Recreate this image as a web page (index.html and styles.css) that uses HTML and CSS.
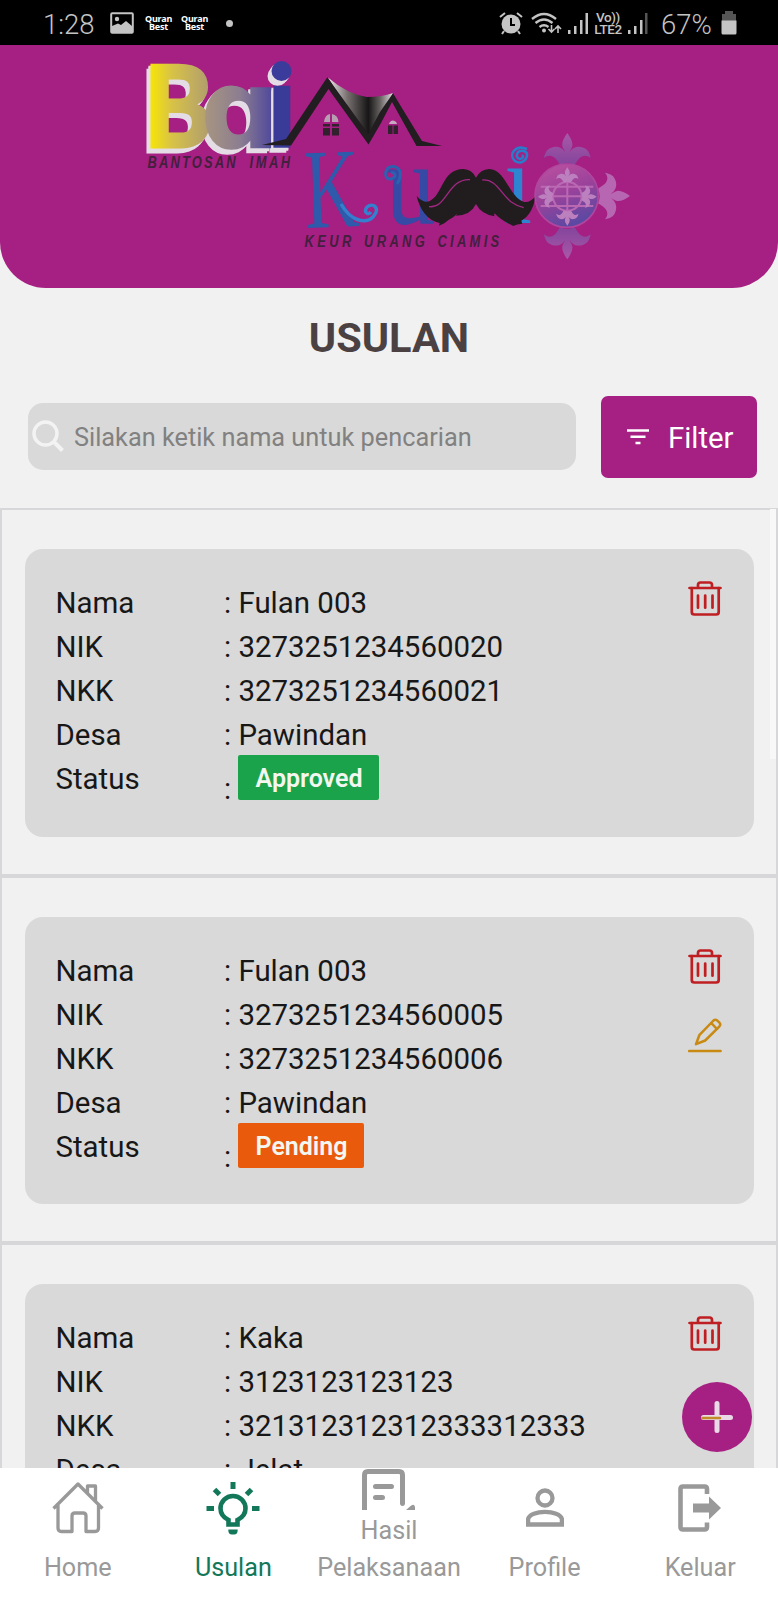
FILE: index.html
```html
<!DOCTYPE html>
<html lang="id">
<head>
<meta charset="utf-8">
<meta name="viewport" content="width=device-width, initial-scale=1">
<title>Usulan</title>
<link rel="stylesheet" href="styles.css">
</head>
<body>
<svg class="sprite" width="0" height="0" aria-hidden="true">
  <symbol id="trash" viewBox="0 0 34 35">
    <g fill="none" stroke="#bf1f22" stroke-width="2.700" stroke-linejoin="round" stroke-linecap="round">
      <path d="M1.500 7H32.500M10 6.500V4Q10 1.500 12.500 1.500H21.500Q24 1.500 24 4V6.500" />
      <path d="M3.800 7V31Q3.800 33.500 6.300 33.500H28.200Q30.700 33.500 30.700 31V7" />
      <path d="M10 14.500V26.700M17.200 14.500V26.700M24.500 14.500V26.700" />
    </g>
  </symbol>
  <symbol id="pencil" viewBox="0 0 34 35">
    <g fill="none" stroke="#c88a12" stroke-width="2.500" stroke-linejoin="round" stroke-linecap="round">
      <path d="M1.300 33H32.500" stroke-width="2.700" />
      <path d="M8 26.200L11.300 17.200L25.500 2.500Q27.200 1 29 2.300L31.500 4.700Q33 6.500 31.500 8.300L17.200 22.500Z M23.300 5L29 11.200" />
    </g>
  </symbol>
  <symbol id="fleur" viewBox="-75 -100 150 105">
    <path d="M0-94C-10-80-17-66-15-55C-13-45-8-43-7-36C-12-48-30-58-48-50C-60-46-66-38-70-19C-58-30-45-27-36-18C-29-10-25-2-22 2Q0-8 22 2C25-2 29-10 36-18C45-27 58-30 70-19C66-38 60-46 48-50C30-58 12-48 7-36C8-43 13-45 15-55C17-66 10-80 0-94Z" />
  </symbol>
</svg>

<div class="screen">
  <div class="statusbar">
    <div class="status-left">
      <span class="time">1:28</span>
      <svg class="photo" width="24" height="22" viewBox="0 0 24 22"><rect x="1.200" y="1.200" width="21.600" height="19.600" rx="1" fill="none" stroke="#c4c4c4" stroke-width="2" /><circle cx="7" cy="7" r="2.200" fill="#c4c4c4" /><path d="M2 20V14L8 11.500L11 13L16 9L22 14V20Z" fill="#c4c4c4" /></svg>
      <span class="quran">Quran<br>Best</span>
      <span class="quran">Quran<br>Best</span>
      <span class="dot"></span>
    </div>
    <div class="status-right">
      <svg width="24" height="23" viewBox="0 0 24 23" fill="none" stroke="#c4c4c4" stroke-width="2"><circle cx="12" cy="12" r="9.500" fill="#c4c4c4" stroke="none" /><path d="M1 5L6 1M18 1L23 5M5 19L3 22M19 19L21 22" /><path d="M12 6V13H16" stroke="#000" /></svg>
      <svg width="31" height="23" viewBox="0 0 31 23" fill="none" stroke="#c4c4c4" stroke-width="2.300"><path d="M1 7Q13-3 25 7M4.500 11Q13 4 21.500 11M8.500 15Q13 11.500 17.500 15" /><circle cx="13" cy="18.500" r="2" fill="#c4c4c4" stroke="none" /><path stroke-width="1.600" d="M20.500 13V20M17.500 17L20.500 20L23.500 17M27 21V14M24 17L27 14L30 17" /></svg>
      <svg class="signal" width="21" height="23" viewBox="0 0 21 23" fill="#c4c4c4"><path d="M0 18h2.500v4H0zM6 14h2.500v8H6zM12 8h2.500v14H12zM17.500 1H20v21h-2.500z" /></svg>
      <span class="lte">Vo))<br>LTE2</span>
      <svg class="signal2" width="21" height="23" viewBox="0 0 21 23" fill="#c4c4c4"><path d="M0 18h2.500v4H0zM6 14h2.500v8H6zM12 8h2.500v14H12z" /><path fill="#555" d="M17 1h2.500v21H17z" /></svg>
      <span class="percent">67%</span>
      <svg width="16" height="24" viewBox="0 0 16 24"><path fill="#555" d="M4 0H12V3H15V10H1V3H4Z" /><path fill="#c4c4c4" d="M.5 9.500H15.500V22Q15.500 23.500 14 23.500H2Q.5 23.500 .5 22Z" /></svg>
    </div>
  </div>

  <header class="hero">
    <svg width="778" height="243" viewBox="0 45 778 243">
      <defs>
        <linearGradient id="roof" x1="0" y1="0" x2="1" y2="0">
          <stop offset="0" stop-color="#eee8ea" /><stop offset=".3" stop-color="#77706f" /><stop offset=".62" stop-color="#171516" /><stop offset=".8" stop-color="#656160" /><stop offset="1" stop-color="#e4dfe2" />
        </linearGradient>
        <linearGradient id="orb" x1=".3" y1="0" x2=".7" y2="1">
          <stop offset="0" stop-color="#b84f9f" /><stop offset=".45" stop-color="#9a429b" /><stop offset="1" stop-color="#514aa4" />
        </linearGradient>
        <linearGradient id="petal" x1="0" y1="0" x2="0" y2="1">
          <stop offset="0" stop-color="#aa58a8" /><stop offset="1" stop-color="#83459c" />
        </linearGradient>
        <linearGradient id="bai-b" x1="0" y1="0" x2="1" y2="0"><stop offset=".05" stop-color="#fbe900" /><stop offset=".4" stop-color="#d8c346" /><stop offset="1" stop-color="#ad9a72" /></linearGradient>
        <linearGradient id="bai-a" x1="0" y1="0" x2="1" y2="0"><stop offset="0" stop-color="#aa987e" /><stop offset=".5" stop-color="#8c7d91" /><stop offset=".95" stop-color="#49439b" /></linearGradient>
      </defs>

      <g class="bai">
        <g transform="translate(144 146.500) scale(.9 .97)"><text class="bai-b" fill="url(#bai-b)" stroke="url(#bai-b)">B</text></g>
        <g transform="translate(201 146.500) scale(.98 .97)"><text class="bai-a" fill="url(#bai-a)" stroke="url(#bai-a)">ɑ</text></g>
        <g transform="translate(266.500 146.500) scale(.8 .98)"><text class="bai-a" fill="#3a3a98" stroke="#3a3a98">ı</text></g>
        <circle cx="281.500" cy="71" r="10" fill="#3b3b9b" />
      </g>

      <path fill="url(#roof)" d="M328 77.500Q347 94 367 97Q382 97 393 93L368.500 142Z" />
      <path fill="#211d20" d="M262 145L286 139L327.300 77.300L368.300 134L380 112L393 93.300L422 141L442 146H416.500L392 102L381 123L368.500 144.500L328.500 89L291 145.500Z" />
      <g fill="#30212c"><path d="M323 124H330V126.500H323ZM332 124H339V126.500H332ZM323 128H330V135.500H323ZM332 128H339V135.500H332Z" /><path fill="#b69fb1" d="M324 122Q325 114.500 330 114V122ZM332 114Q338 115 338.500 122H332Z" />
      <path d="M388 125.500H392.500V134H388ZM393.500 125.500H398V134H393.500Z" /><path fill="#c6abc0" d="M389 124Q390 120.500 393 120.500Q396.500 121 397 124Z" /></g>

      <g class="tagline">
        <g transform="translate(147.500 168) scale(.78 1)"><text textLength="113">BANTOSAN</text></g>
        <g transform="translate(249.500 168) scale(.78 1)"><text textLength="52">IMAH</text></g>
        <g transform="translate(304.500 246.500) scale(.78 1)"><text textLength="60">KEUR</text></g>
        <g transform="translate(364 246.500) scale(.78 1)"><text textLength="78">URANG</text></g>
        <g transform="translate(437.500 246.500) scale(.78 1)"><text textLength="79">CIAMIS</text></g>
      </g>

      <g transform="translate(306 228) rotate(-2) scale(.66 1)"><text class="kuni" fill="#2f59aa">K</text></g>
      <path d="M341 204C350 220 365 225 373 217C381 208 373 202 367 207C363 212 368 216 371 212" fill="none" stroke="#347fce" stroke-width="3.500" />
      <g transform="translate(386 224) scale(.83 1)"><text class="kuni kuni-u" fill="#3549a5">u</text></g>
      <path d="M397 184C406 170 395 163 388 168C381 177 391 183 395 176Q395 172 391 173" fill="none" stroke="#2c61b0" stroke-width="3" />
      <g transform="translate(504 223) scale(.85 1)"><text class="kuni kuni-u" fill="#2d84d0">ı</text></g>
      <path d="M527 149C515 144 508 155 515 161C523 167 532 154 524 151C517 149 514 158 520 159Q525 158 522 155" fill="none" stroke="#287cc9" stroke-width="2.600" />

      <g transform="translate(380 60) scale(.3333)">
        <path fill="#211d1e" d="M110 408Q130 430 148 424C190 404 185 328 250 327Q276 328 288 353Q302 328 327 327C376 327 386 408 430 425Q448 431 467 408C460 448 446 470 424 482L427 491Q410 492 400 498C379 488 363 480 344 460Q341 466 344 469Q304 463 288 432Q272 466 228 467L232 461C218 475 202 480 193 490L177 497L179 489C145 483 119 450 110 408Z" />
        <path d="M147 440C202 446 202 356 270 359M307 360C350 357 361 401 394 426Q412 439 431 443" fill="none" stroke="#a02782" stroke-width="4" />
        <g fill="url(#petal)">
          <use href="#fleur" x="-75" y="-100" width="150" height="105" transform="translate(562 313)" />
          <use href="#fleur" x="-75" y="-100" width="150" height="105" transform="translate(562 504) scale(1 -1)" />
        </g>
        <use href="#fleur" x="-75" y="-100" width="150" height="105" transform="translate(656 408) rotate(90)" fill="#b766b1" />
        <circle cx="560" cy="407" r="95" fill="url(#orb)" stroke="#b0479f" stroke-width="5" />
        <g fill="none" stroke="#bb68b3" stroke-width="6"><circle cx="562" cy="409" r="43" /><path d="M482 380H640M482 438H640M562 365V455M510 409H612" /></g>
        <g fill="#bd80bf">
          <use href="#fleur" x="-36" y="-48" width="72" height="50" transform="translate(562 367)" />
          <use href="#fleur" x="-36" y="-48" width="72" height="50" transform="translate(562 452) scale(1 -1)" />
          <use href="#fleur" x="-36" y="-48" width="72" height="50" transform="translate(519 410) rotate(-90)" />
          <use href="#fleur" x="-36" y="-48" width="72" height="50" transform="translate(605 410) rotate(90)" />
        </g>
      </g>
    </svg>
  </header>

  <h1 class="title">USULAN</h1>

  <div class="tools">
    <div class="search">
      <svg width="32" height="32" viewBox="0 0 32 32" fill="none" stroke="#f3f3f3" stroke-width="3.500"><circle cx="13.500" cy="13.500" r="11.500" /><path d="M21.500 21.500L30.500 30.500" stroke-width="4" /></svg>
      <span>Silakan ketik nama untuk pencarian</span>
    </div>
    <div class="filter">
      <svg width="22" height="16" viewBox="0 0 22 16" stroke="#fff" stroke-width="2.500"><path d="M0 1.500H22M3.500 7.800H18.500M8.500 14H13.500" /></svg>
      <span>Filter</span>
    </div>
  </div>

  <main class="list">
    <section class="item">
      <div class="card">
        <dl class="data">
          <dt>Nama</dt><dd>: Fulan 003</dd>
          <dt>NIK</dt><dd>: 3273251234560020</dd>
          <dt>NKK</dt><dd>: 3273251234560021</dd>
          <dt>Desa</dt><dd>: Pawindan</dd>
          <dt>Status</dt><dd class="state"><span class="colon">:</span><span class="badge approved">Approved</span></dd>
        </dl>
        <div class="actions"><svg width="34" height="35"><use href="#trash" /></svg></div>
      </div>
    </section>
    <section class="item">
      <div class="card">
        <dl class="data">
          <dt>Nama</dt><dd>: Fulan 003</dd>
          <dt>NIK</dt><dd>: 3273251234560005</dd>
          <dt>NKK</dt><dd>: 3273251234560006</dd>
          <dt>Desa</dt><dd>: Pawindan</dd>
          <dt>Status</dt><dd class="state"><span class="colon">:</span><span class="badge pending">Pending</span></dd>
        </dl>
        <div class="actions"><svg width="34" height="35"><use href="#trash" /></svg><svg width="34" height="35"><use href="#pencil" /></svg></div>
      </div>
    </section>
    <section class="item">
      <div class="card">
        <dl class="data">
          <dt>Nama</dt><dd>: Kaka</dd>
          <dt>NIK</dt><dd>: 3123123123123</dd>
          <dt>NKK</dt><dd>: 321312312312333312333</dd>
          <dt>Desa</dt><dd>: Jelat</dd>
        </dl>
        <div class="actions"><svg width="34" height="35"><use href="#trash" /></svg></div>
      </div>
    </section>
    <div class="scrollbar"></div>
    <div class="fab">
      <svg width="70" height="70" viewBox="0 0 70 70" stroke-linecap="round"><path d="M35 21.500V48.500M21.500 35.500H48.500" stroke="#ead9e6" stroke-width="5" /><path d="M20.500 36H38" stroke="#c08b28" stroke-width="2.600" /></svg>
    </div>
  </main>

  <nav class="nav">
    <div class="tab">
      <svg width="52" height="52" viewBox="0 0 52 52" fill="none" stroke="#999" stroke-width="3.300" stroke-linejoin="round"><path d="M1.500 26.500L26 2L50.500 26.500M6 22V46Q6 49.500 9.500 49.500H20V34Q20 31 23 31H31Q34 31 34 34V49.500H43Q46.500 49.500 46.500 46V22M35.500 11V4H43.500V19" /></svg>
      <span>Home</span>
    </div>
    <div class="tab active">
      <svg width="54" height="54" viewBox="0 0 54 54" fill="none" stroke="#127859" stroke-width="4.600"><path d="M22.500 43.500V39Q14.500 35 14.500 27.500A12.500 12.500 0 0 1 39.500 27.500Q39.500 35 31.500 39V43.500Z" /><path d="M22.300 48.500H31.700V49Q31.700 53.500 28 53.500H26Q22.300 53.500 22.300 49Z" fill="#127859" stroke="none" /><path stroke-width="5" d="M27 1V8M.5 27.500H8M46 27.500H53.500M8.500 8.500L13.500 13.500M45.500 8.500L40.500 13.500" /></svg>
      <span>Usulan</span>
    </div>
    <div class="tab result">
      <svg width="54" height="42" viewBox="0 0 54 42"><path d="M2.500 41V6Q2.500 2.500 6 2.500H37Q40.500 2.500 40.500 6V35" fill="none" stroke="#999" stroke-width="5" /><path d="M38 34H43Q43 37 40.500 37Q38 37 38 34ZM44 41L48 37.500Q52 34 53 38V41Z" fill="#999" /><path d="M13.500 17.500H29.500M13.500 28.500H20.500" stroke="#999" stroke-width="5" stroke-linecap="round" /></svg>
      <span>Hasil<br>Pelaksanaan</span>
    </div>
    <div class="tab profile">
      <svg width="38" height="39" viewBox="0 0 38 39" fill="none" stroke="#999" stroke-width="4.300"><circle cx="19" cy="10" r="7.500" /><path d="M2.100 36.500V31C4 21.500 34 21.500 35.900 31V36.500Z" /></svg>
      <span>Profile</span>
    </div>
    <div class="tab logout">
      <svg width="44" height="48" viewBox="0 0 44 48"><path d="M29 10V5Q29 2.500 26.500 2.500H5Q2.500 2.500 2.500 5V43Q2.500 45.500 5 45.500H26.500Q29 45.500 29 43V38.500" fill="none" stroke="#999" stroke-width="4.600" /><path d="M15 19.500H31V12.500L43 24L31 35.500V28.500H15Z" fill="#999" /></svg>
      <span>Keluar</span>
    </div>
  </nav>
</div>
</body>
</html>
```
FILE: styles.css
```css
* { box-sizing: border-box; }
body { margin: 0; background: #f1f1f2; font-family: Roboto, "Liberation Sans", sans-serif; }
svg { display: block; flex: none; }
.sprite { position: absolute; }
.screen { width: 778px; height: 1600px; display: flex; flex-direction: column; overflow: hidden; }

.statusbar { height: 45px; flex: none; background: #000; color: #c4c4c4; display: flex; justify-content: space-between; padding: 0 41px 0 43px; }
.status-left, .status-right { display: flex; align-items: center; height: 46px; }
.time, .percent { font-size: 27.500px; font-weight: 300; line-height: 32px; padding-top: 3px; }
.time { width: 54px; }
.photo { margin-left: 13px; }
.quran { font: bold 9px/8px "Noto Sans", sans-serif; color: #fff; text-align: center; width: 27px; margin-left: 11px; letter-spacing: -.2px; }
.quran + .quran { margin-left: 9px; }
.dot { width: 7px; height: 7px; border-radius: 50%; background: #c4c4c4; margin-left: 18px; }
.status-right svg:nth-child(2) { margin-left: 8px; }
.signal { margin-left: 6px; }
.lte { font-size: 13.500px; line-height: 12.500px; font-weight: 500; text-align: center; width: 30px; margin-left: 4px; letter-spacing: -.4px; }
.signal2 { margin-left: 5px; }
.percent { margin: 0 8px 0 12px; width: 52px; }

.hero { height: 242.500px; flex: none; background: #a61f82; border-radius: 0 0 46px 46px; overflow: hidden; }
.bai { filter: drop-shadow(-1.500px 2px 0 #e4dde6) drop-shadow(-2px 3px 0 #e4dde6); }
.bai-b { font: 900 115px Lato, sans-serif; stroke-width: 3px; }
.bai-a { font: bold 112px "DejaVu Sans", sans-serif; stroke-width: 1.500px; }
.tagline { font: italic bold 16.500px "Liberation Sans", sans-serif; fill: #43203d; }
.kuni { font: 114px "Liberation Serif", serif; }
.kuni-u { font-size: 119px; }

.title { margin: 25.500px 0 0; height: 48px; flex: none; font-size: 41.500px; line-height: 49px; font-weight: 700; color: #4b4142; text-align: center; }
.tools { display: flex; align-items: center; gap: 25px; margin-top: 35px; padding: 0 21.500px 0 28px; height: 82px; flex: none; }
.search { flex: 1; height: 67px; margin-bottom: 1px; border-radius: 15px; background: #d9d9d9; display: flex; align-items: center; gap: 10.500px; padding-left: 3.500px; font-size: 25.300px; color: #818181; }
.search span { padding-top: 2px; }
.search svg { margin-top: -1px; }
.filter { width: 155.500px; height: 82px; border-radius: 7px; background: #a61f82; color: #fff; display: flex; align-items: center; gap: 19px; padding-left: 26px; font-size: 29.330px; }
.filter span { padding-top: 2px; }

.list { flex: 1; min-height: 0; margin-top: 30px; position: relative; overflow: hidden; border-top: 1px solid #d7d7d9; }
.item { height: 366.500px; border: 2px solid #d7d7d9; border-top-width: 1px; padding: 39px 22px 0 23px; }
.item + .item { height: 367.500px; border-top-width: 2px; }
.card { height: 287.500px; border-radius: 18px; background: #d9d9d9; display: flex; justify-content: space-between; padding: 32px 32.500px 0 30.500px; }
.data { margin: 0; display: grid; grid-template-columns: 168.500px auto; grid-auto-rows: 44px; align-content: start; font-size: 29.450px; line-height: 44px; color: #171717; white-space: nowrap; }
.data dd { margin: 0; }
.state { display: flex; align-items: flex-start; }
.colon { width: 14px; padding-top: 10px; }
.badge { height: 45.300px; margin-top: -2px; padding: 0 16.500px 0 17.500px; border-radius: 2px; font-size: 25px; line-height: 47.500px; font-weight: 600; color: #f3f7f0; }
.approved { background: #1aa34a; }
.pending { background: #ea5a0c; }
.actions { display: flex; flex-direction: column; gap: 34px; }
.scrollbar { position: absolute; top: 0; right: 2px; width: 6px; height: 250px; background: #f8f8f9; }
.fab { position: absolute; right: 26px; bottom: 15.500px; width: 70px; height: 70px; border-radius: 50%; background: #a61f82; }

.nav { height: 132.500px; flex: none; background: #fff; display: grid; grid-template-columns: repeat(5, 1fr); color: #999; font-size: 25.200px; line-height: 37px; text-align: center; }
.tab { display: flex; flex-direction: column; align-items: center; justify-content: space-between; padding: 14px 0 14px; white-space: nowrap; }
.active { color: #127859; padding-top: 13px; }
.result { padding-top: 1px; }
.profile { padding-top: 20px; }
.logout { padding-top: 16px; }
```
